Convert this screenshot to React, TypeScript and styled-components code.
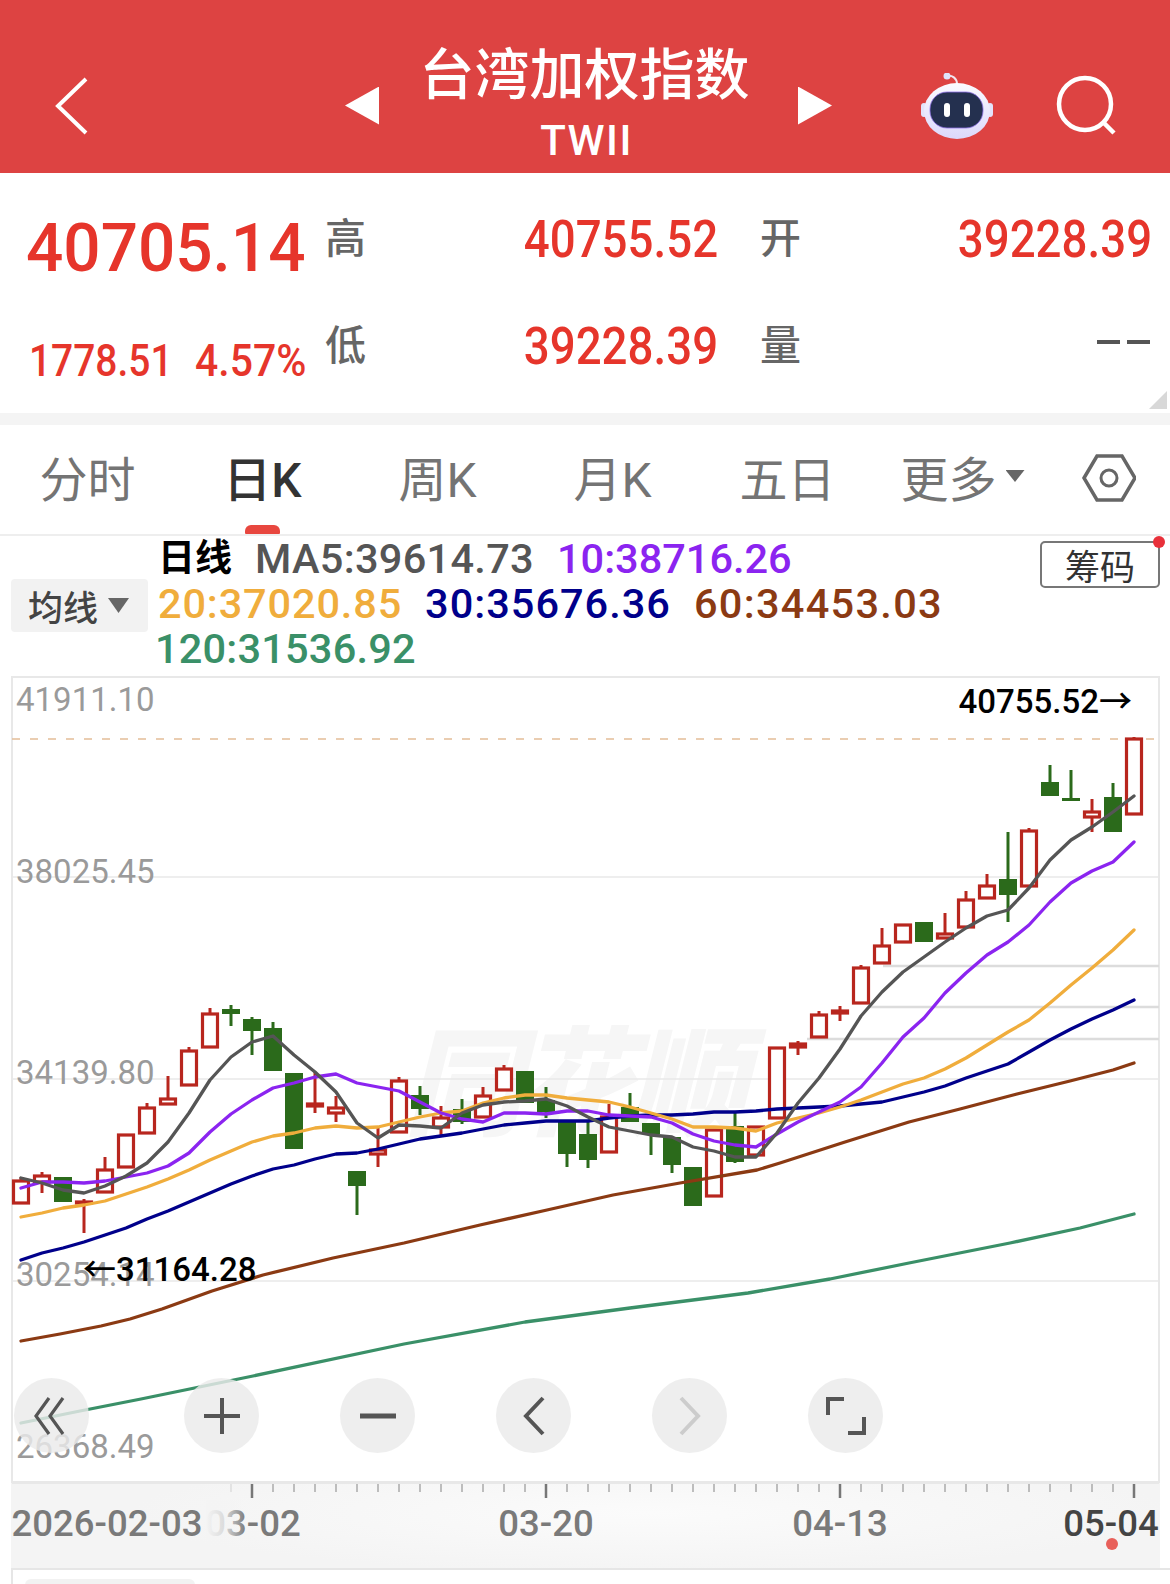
import * as React from "react";
import styled, { createGlobalStyle } from "styled-components";

const SANS = `Roboto, "Noto Sans CJK SC", sans-serif`;
const RED = "#e6352b";

const GlobalStyle = createGlobalStyle`
  html, body {
    margin: 0;
    padding: 0;
    background: #fff;
  }
  * {
    box-sizing: border-box;
  }
`;

const Page = styled.div`
  width: 1170px;
  height: 1584px;
  overflow: hidden;
  background: #fff;
  font-family: ${SANS};
`;

/* top bar */
const TopBar = styled.header`
  display: flex;
  align-items: center;
  height: 173px;
  padding-top: 38px;
  background: #dd4342;
  color: #fff;
`;

const BackSlot = styled.div`
  display: flex;
  width: 345px;
  padding-left: 55px;
`;

const Triangle = styled.div<{ $dir: "left" | "right" }>`
  width: 34px;
  height: 38px;
  background: #fff;
  clip-path: ${(p) =>
    p.$dir === "left"
      ? "polygon(100% 0, 100% 100%, 0 50%)"
      : "polygon(0 0, 100% 50%, 0 100%)"};
`;

const TitleBlock = styled.div`
  align-self: flex-start;
  display: flex;
  flex-direction: column;
  align-items: center;
  width: 419px;
  padding: 1px 8px 0 0;
`;

const Title = styled.div`
  font-size: 55px;
  font-weight: 500;
  line-height: 72px;
`;

const Code = styled.div`
  margin: 5px 0 0 4px;
  font-size: 42px;
  font-weight: 500;
  line-height: 50px;
  letter-spacing: 1.5px;
`;

const RobotSlot = styled.div`
  display: flex;
  margin-left: 88px;
`;

const SearchSlot = styled.div`
  display: flex;
  margin-left: 62px;
`;

/* quote */
const Quote = styled.section`
  position: relative;
  display: grid;
  grid-template-columns: 299px 41px 352px 81px 1fr;
  grid-auto-rows: 107px;
  align-items: center;
  height: 240px;
  padding: 13px 18px 0 26px;
`;

const BigPrice = styled.div`
  padding-top: 17px;
`;

const Num = styled.span<{ $size: number; $narrow?: number; $end?: boolean }>`
  display: inline-block;
  color: ${RED};
  font-size: ${(p) => p.$size}px;
  font-weight: 500;
  line-height: 1;
  white-space: nowrap;
  transform: scaleX(${(p) => p.$narrow ?? 0.895});
  transform-origin: ${(p) => (p.$end ? "right" : "left")} center;
`;

const Value = styled.div`
  text-align: right;
`;

const Label = styled.div<{ $pad?: boolean }>`
  padding-left: ${(p) => (p.$pad ? 42 : 0)}px;
  color: #666;
  font-size: 41px;
  line-height: 1;
  font-weight: 500;
`;

const Change = styled.div`
  display: flex;
  gap: 24px;
  padding-top: 28px;
  margin-left: 3px;
`;

const ChangeNum = styled.span<{ $narrow: number }>`
  display: inline-block;
  color: ${RED};
  font-size: 45px;
  font-weight: 500;
  line-height: 1;
  width: 142px;
  white-space: nowrap;
  transform: scaleX(${(p) => p.$narrow});
  transform-origin: left center;
`;

const Dashes = styled.div`
  display: flex;
  justify-content: flex-end;
  gap: 7px;
  padding: 0 2px 10px 0;
`;

const Dash = styled.span`
  width: 23px;
  height: 4px;
  background: #555;
`;

const Corner = styled.div`
  position: absolute;
  right: 3px;
  bottom: 4px;
  width: 18px;
  height: 18px;
  background: #d8d8d8;
  clip-path: polygon(100% 0, 100% 100%, 0 100%);
`;

const Gap = styled.div`
  height: 12px;
  background: #f4f4f4;
`;

/* period tabs */
const Tabs = styled.nav`
  display: flex;
  align-items: center;
  height: 111px;
  padding-bottom: 7px;
  border-bottom: 2px solid #eee;
`;

const Tab = styled.div<{ $active?: boolean }>`
  position: relative;
  display: flex;
  align-items: center;
  justify-content: center;
  width: 175px;
  height: 100%;
  color: ${(p) => (p.$active ? "#333" : "#747474")};
  font-size: 48px;
  font-weight: ${(p) => (p.$active ? 500 : 400)};
`;

const ActiveBar = styled.span`
  position: absolute;
  left: 70px;
  bottom: -7px;
  width: 35px;
  height: 9px;
  border-radius: 6px 6px 1px 1px;
  background: #e8473f;
`;

const Caret = styled.span`
  width: 19px;
  height: 12px;
  margin-left: 9px;
  background: #666;
  clip-path: polygon(0 0, 100% 0, 50% 100%);
`;

const SettingsSlot = styled.div`
  display: flex;
  justify-content: center;
  flex: 1;
  margin-right: 3px;
  padding-top: 4px;
`;

/* moving averages */
const Legend = styled.section`
  position: relative;
  display: flex;
  height: 140px;
  padding: 0 11px;
`;

const MaSelect = styled.div`
  display: flex;
  align-items: center;
  align-self: flex-start;
  gap: 10px;
  width: 137px;
  height: 53px;
  margin-top: 43px;
  padding-left: 17px;
  border-radius: 4px;
  background: #f2f2f2;
  color: #444;
  font-size: 35px;
  font-weight: 500;
`;

const MaCaret = styled.span`
  width: 21px;
  height: 15px;
  background: #666;
  clip-path: polygon(0 0, 100% 0, 50% 100%);
`;

const MaRows = styled.div`
  display: flex;
  flex-direction: column;
  margin-left: 10px;
`;

const MaRow = styled.div`
  display: flex;
  gap: 23px;
  height: 45px;
  line-height: 45px;
  align-items: center;
  white-space: nowrap;
`;

const MaName = styled.span`
  color: #000;
  font-size: 37px;
  font-weight: 700;
`;

const MaValue = styled.span<{ $color: string; $spacing?: number }>`
  color: ${(p) => p.$color};
  font-size: 41.5px;
  font-weight: 500;
  letter-spacing: ${(p) => p.$spacing ?? 0}px;
`;

const MaValueOutdent = styled(MaValue)`
  margin-left: -3px;
`;

const ChipButton = styled.div`
  position: absolute;
  top: 5px;
  right: 10px;
  display: flex;
  align-items: center;
  justify-content: center;
  width: 120px;
  height: 47px;
  border: 2px solid #777;
  border-radius: 5px;
  color: #333;
  font-size: 35px;
`;

const RedDot = styled.span`
  position: absolute;
  top: -7px;
  right: -7px;
  width: 12px;
  height: 12px;
  border-radius: 50%;
  background: #e8303a;
`;

/* chart */
const ChartBox = styled.div`
  position: relative;
  width: 1149px;
  height: 807px;
  margin-left: 11px;
`;

const ChartSvg = styled.svg`
  display: block;
`;

const Controls = styled.div`
  position: absolute;
  left: 3px;
  top: 702px;
  display: flex;
  gap: 81px;
`;

const RoundButton = styled.div<{ $extra?: number }>`
  display: flex;
  align-items: center;
  justify-content: center;
  width: 75px;
  height: 75px;
  margin-right: ${(p) => p.$extra ?? 0}px;
  border-radius: 50%;
  background: rgba(234, 234, 234, 0.82);
`;

const AxisStrip = styled.div`
  width: 1149px;
  height: 85px;
  margin-left: 11px;
  background: radial-gradient(ellipse 520px 60px at 640px 30px, #fbfbfb, #f4f4f4 100%);
`;

const AxisSvg = styled.svg`
  display: block;
`;

const Footer = styled.div`
  height: 40px;
  margin-left: 11px;
  padding: 9px 0 0 12px;
  border-top: 2px solid #e6e6e6;
  border-left: 2px solid #e6e6e6;
`;

const FooterPill = styled.div`
  width: 170px;
  height: 30px;
  border-radius: 6px;
  background: #f2f2f2;
`;

type Candle = [number, number, number, number, "r" | "g"];

// top, bottom, high, low in page pixels, one candle every 21px from x=21
const candles: Candle[] = [
  [1180, 1204, 1177, 1204, "r"], [1175, 1183, 1172, 1193, "r"], [1177, 1202, 1177, 1202, "g"],
  [1201, 1204, 1199, 1233, "r"], [1169, 1193, 1157, 1193, "r"], [1134, 1168, 1134, 1168, "r"],
  [1107, 1134, 1103, 1134, "r"], [1098, 1105, 1076, 1105, "r"], [1050, 1086, 1047, 1086, "r"],
  [1013, 1048, 1008, 1048, "r"], [1009, 1014, 1005, 1026, "g"], [1019, 1031, 1017, 1055, "g"],
  [1028, 1071, 1022, 1071, "g"], [1073, 1149, 1073, 1149, "g"], [1103, 1107, 1072, 1113, "r"],
  [1107, 1114, 1096, 1122, "r"], [1171, 1186, 1171, 1215, "g"], [1149, 1155, 1128, 1167, "r"],
  [1080, 1133, 1077, 1133, "r"], [1095, 1109, 1086, 1115, "g"], [1117, 1128, 1106, 1137, "r"],
  [1109, 1122, 1099, 1124, "g"], [1095, 1118, 1087, 1118, "r"], [1068, 1091, 1065, 1091, "r"],
  [1071, 1103, 1071, 1103, "g"], [1100, 1112, 1087, 1118, "g"], [1122, 1154, 1122, 1167, "g"],
  [1134, 1160, 1122, 1168, "g"], [1116, 1153, 1104, 1153, "r"], [1107, 1122, 1093, 1122, "g"],
  [1123, 1134, 1123, 1155, "g"], [1137, 1165, 1137, 1173, "g"], [1167, 1206, 1167, 1206, "g"],
  [1129, 1197, 1129, 1197, "r"], [1126, 1162, 1113, 1163, "g"], [1126, 1156, 1126, 1156, "r"],
  [1047, 1119, 1047, 1119, "r"], [1043, 1048, 1041, 1055, "r"], [1014, 1038, 1011, 1038, "r"],
  [1010, 1014, 1006, 1021, "r"], [967, 1004, 965, 1004, "r"], [945, 964, 928, 964, "r"],
  [924, 943, 924, 943, "r"], [922, 942, 922, 942, "g"], [933, 939, 913, 939, "r"],
  [899, 928, 891, 928, "r"], [885, 899, 874, 899, "r"], [879, 895, 832, 922, "g"],
  [830, 887, 828, 887, "r"], [782, 796, 765, 796, "g"], [798, 801, 770, 801, "g"],
  [811, 818, 799, 832, "r"], [797, 832, 783, 832, "g"], [738, 815, 737, 815, "r"],
];

const indexLine = (ys: number[]) => ys.map((y, i) => `${21 + i * 21},${y}`).join(" ");

const ma5 = indexLine([
  1178, 1183, 1190, 1193, 1186, 1176, 1163, 1142, 1113, 1080, 1057, 1042, 1036, 1055, 1072, 1092,
  1123, 1138, 1125, 1126, 1128, 1113, 1105, 1102, 1101, 1099, 1106, 1117, 1127, 1131, 1135, 1137,
  1147, 1151, 1157, 1157, 1133, 1103, 1078, 1049, 1016, 992, 972, 957, 942, 928, 916, 910, 888,
  860, 840, 827, 812, 796,
]);
const ma10 = indexLine([
  1188, 1182, 1182, 1183, 1181, 1177, 1173, 1166, 1153, 1132, 1114, 1100, 1088, 1083, 1077, 1074,
  1083, 1087, 1091, 1102, 1113, 1119, 1122, 1113, 1113, 1114, 1111, 1111, 1115, 1116, 1117, 1123,
  1134, 1141, 1145, 1147, 1134, 1122, 1112, 1102, 1087, 1063, 1037, 1018, 993, 973, 955, 942, 925,
  902, 883, 871, 862, 842,
]);
const ma20 = indexLine([
  1217, 1213, 1208, 1205, 1201, 1194, 1187, 1179, 1170, 1160, 1151, 1142, 1136, 1133, 1128, 1126,
  1128, 1127, 1122, 1117, 1113, 1111, 1103, 1098, 1095, 1095, 1098, 1100, 1102, 1107, 1113, 1119,
  1127, 1127, 1128, 1131, 1123, 1118, 1113, 1107, 1100, 1092, 1084, 1078, 1069, 1058, 1045, 1032,
  1020, 1003, 985, 968, 950, 930,
]);
const ma30 = indexLine([
  1260, 1253, 1248, 1242, 1235, 1228, 1219, 1211, 1202, 1193, 1184, 1176, 1169, 1165, 1159, 1154,
  1153, 1149, 1144, 1139, 1136, 1133, 1129, 1125, 1123, 1121, 1121, 1121, 1118, 1116, 1115, 1115,
  1114, 1112, 1112, 1111, 1109, 1108, 1107, 1106, 1104, 1102, 1097, 1092, 1086, 1078, 1071, 1064,
  1052, 1040, 1029, 1019, 1010, 1000,
]);
const ma60 =
  "21,1341 60,1334 101,1326 130,1319 162,1309 212,1291 263,1275 333,1258 404,1243 480,1225 547,1210 613,1195 680,1183 757,1170 780,1163 845,1142 909,1122 960,1109 1017,1094 1070,1081 1113,1070 1134,1063";
const ma120 =
  "21,1423 80,1411 141,1399 253,1376 404,1344 525,1322 630,1308 748,1293 830,1279 909,1263 1010,1243 1080,1228 1134,1214";

const gridLines = [877, 1079, 1281];
const priceLabels: [string, number][] = [
  ["41911.10", 711],
  ["38025.45", 883],
  ["34139.80", 1084],
  ["30254.14", 1286],
  ["26368.49", 1458],
];
const heavyLines: [number, number][] = [
  [883, 966],
  [870, 1007],
  [807, 1039],
];

const CandleMark: React.FC<{ c: Candle; x: number }> = ({ c, x }) => {
  const [top, bottom, high, low, kind] = c;
  const color = kind === "r" ? "#b8261e" : "#2b6a1b";
  const thin = bottom - top < 5;
  if (kind === "g") {
    return (
      <g>
        <line x1={x} x2={x} y1={high} y2={low} stroke={color} strokeWidth={3} />
        <rect x={x - 9} y={top} width={18} height={bottom - top} fill={color} />
      </g>
    );
  }
  return (
    <g>
      <line x1={x} x2={x} y1={high} y2={low} stroke={color} strokeWidth={3} />
      <rect
        x={x - 7.5}
        y={top + 1}
        width={15}
        height={Math.max(bottom - top - 2, 1)}
        fill={thin ? color : "#fff"}
        stroke={color}
        strokeWidth={3.2}
      />
    </g>
  );
};

const MaLine: React.FC<{ points: string; color: string }> = ({ points, color }) => (
  <polyline
    points={points}
    fill="none"
    stroke={color}
    strokeWidth={3.3}
    strokeLinejoin="round"
    strokeLinecap="round"
  />
);

const KChart: React.FC = () => (
  <ChartSvg width={1149} height={807} viewBox="11 676 1149 807">
    <rect x={12} y={677} width={1147} height={805} fill="#fff" stroke="#e8e8e8" strokeWidth={2} />
    <text
      x={404}
      y={1126}
      fontFamily={SANS}
      fontSize={118}
      fontWeight={900}
      fontStyle="italic"
      fill="#f6f6f6"
      textLength={342}
    >
      同花顺
    </text>
    {gridLines.map((y) => (
      <line key={y} x1={12} x2={1159} y1={y} y2={y} stroke="#e8e8e8" strokeWidth={1.5} />
    ))}
    {heavyLines.map(([x, y]) => (
      <line key={y} x1={x} x2={1159} y1={y} y2={y} stroke="#dcdcdc" strokeWidth={2.5} />
    ))}
    <line x1={12} x2={1159} y1={739} y2={739} stroke="#e3bd98" strokeWidth={1.5} strokeDasharray="8 10" />
    {priceLabels.map(([text, y]) => (
      <text key={text} x={16} y={y} fontFamily={SANS} fontSize={33} fill="#9a9a9a">
        {text}
      </text>
    ))}
    {candles.map((c, i) => (
      <CandleMark key={i} c={c} x={21 + i * 21} />
    ))}
    <MaLine points={ma120} color="#3a9068" />
    <MaLine points={ma60} color="#8b3a13" />
    <MaLine points={ma30} color="#00008b" />
    <MaLine points={ma20} color="#f0ad3c" />
    <MaLine points={ma10} color="#8b24f0" />
    <MaLine points={ma5} color="#555" />
    <text x={1132} y={713} textAnchor="end" fontFamily={SANS} fontSize={33} fontWeight={500} fill="#000">
      40755.52→
    </text>
    <text x={83} y={1281} fontFamily={SANS} fontSize={33} fontWeight={500} fill="#000">
      ←31164.28
    </text>
  </ChartSvg>
);

const Glyph: React.FC<{ d: string; color?: string; width?: number }> = ({ d, color = "#555", width = 4 }) => (
  <svg width={40} height={40} viewBox="-20 -20 40 40">
    <path d={d} fill="none" stroke={color} strokeWidth={width} />
  </svg>
);

const minorTicks = Array.from({ length: 43 }, (_, i) => 231 + i * 21);
const majorTicks = [252, 546, 840, 1134];

const XAxis: React.FC = () => (
  <AxisSvg width={1149} height={85} viewBox="11 1483 1149 85">
    <defs>
      <linearGradient id="fade">
        <stop offset="0" stopColor="#f4f4f4" />
        <stop offset="0.45" stopColor="#f4f4f4" stopOpacity="0.8" />
        <stop offset="1" stopColor="#f4f4f4" stopOpacity="0" />
      </linearGradient>
    </defs>
    <line x1={12} x2={1159} y1={1483.5} y2={1483.5} stroke="#e8e8e8" />
    {minorTicks.map((x) => (
      <line
        key={x}
        x1={x}
        x2={x}
        y1={1484}
        y2={1492}
        stroke={x === 231 ? "#ddd" : "#aaa"}
        strokeWidth={1.5}
      />
    ))}
    {majorTicks.map((x) => (
      <line key={x} x1={x} x2={x} y1={1484} y2={1498} stroke="#777" strokeWidth={2.5} />
    ))}
    <g fontFamily={SANS} fontSize={36.5} fontWeight={500} fill="#7a7a7a" textAnchor="middle">
      <text x={253} y={1536}>03-02</text>
      <rect x={206} y={1500} width={40} height={45} fill="url(#fade)" />
      <text x={107} y={1536}>2026-02-03</text>
      <text x={546} y={1536}>03-20</text>
      <text x={840} y={1536}>04-13</text>
      <text x={1111} y={1536} fill="#444">05-04</text>
    </g>
    <circle cx={1112} cy={1544} r={6} fill="#e8605a" />
  </AxisSvg>
);

const Robot: React.FC = () => (
  <svg width={74} height={66} viewBox="920 72 74 66">
    <defs>
      <linearGradient id="shell" x1="0" y1="0" x2="0" y2="1">
        <stop offset="0" stopColor="#fbfbff" />
        <stop offset="1" stopColor="#dcd8fb" />
      </linearGradient>
    </defs>
    <path d="M947 75 C952 74 957 77 957 83" fill="none" stroke="#f2e6ee" strokeWidth={2} />
    <circle cx={947} cy={75} r={3.5} fill="#dfe4fb" />
    <rect x={921} y={102} width={6} height={14} rx={3} fill="#e3e4fb" />
    <rect x={987} y={102} width={6} height={14} rx={3} fill="#e3e4fb" />
    <ellipse cx={957} cy={110} rx={33} ry={28} fill="url(#shell)" />
    <rect x={930} y={91} width={53} height={36} rx={17} fill="#24304f" stroke="#8f72e8" strokeWidth={0.8} />
    <rect x={944} y={102} width={6} height={14} rx={3} fill="#fff" />
    <rect x={964} y={102} width={6} height={14} rx={3} fill="#fff" />
  </svg>
);

const App: React.FC = () => (
  <Page>
    <GlobalStyle />
    <TopBar>
      <BackSlot>
        <svg width={34} height={58} viewBox="0 0 34 58">
          <path d="M31 2 L3 29 L31 56" fill="none" stroke="#fff" strokeWidth={4} />
        </svg>
      </BackSlot>
      <Triangle $dir="left" />
      <TitleBlock>
        <Title>台湾加权指数</Title>
        <Code>TWII</Code>
      </TitleBlock>
      <Triangle $dir="right" />
      <RobotSlot>
        <Robot />
      </RobotSlot>
      <SearchSlot>
        <svg width={62} height={62} viewBox="0 0 62 62">
          <circle cx={29} cy={29} r={26} fill="none" stroke="#fff" strokeWidth={4.5} />
          <path d="M47 47 L58 58" stroke="#fff" strokeWidth={4.5} />
        </svg>
      </SearchSlot>
    </TopBar>

    <Quote>
      <BigPrice>
        <Num $size={67} $narrow={0.98}>40705.14</Num>
      </BigPrice>
      <Label>高</Label>
      <Value>
        <Num $size={51} $end>40755.52</Num>
      </Value>
      <Label $pad>开</Label>
      <Value>
        <Num $size={51} $end>39228.39</Num>
      </Value>
      <Change>
        <ChangeNum $narrow={0.865}>1778.51</ChangeNum>
        <ChangeNum $narrow={0.91}>4.57%</ChangeNum>
      </Change>
      <Label>低</Label>
      <Value>
        <Num $size={51} $end>39228.39</Num>
      </Value>
      <Label $pad>量</Label>
      <Dashes>
        <Dash />
        <Dash />
      </Dashes>
      <Corner />
    </Quote>
    <Gap />

    <Tabs>
      <Tab>分时</Tab>
      <Tab $active>
        日K
        <ActiveBar />
      </Tab>
      <Tab>周K</Tab>
      <Tab>月K</Tab>
      <Tab>五日</Tab>
      <Tab>
        更多
        <Caret />
      </Tab>
      <SettingsSlot>
        <svg width={54} height={48} viewBox="1082 454 54 48">
          <path
            d="M1084 478 L1097 456 L1122 456 L1135 478 L1122 500 L1097 500 Z"
            fill="none"
            stroke="#666"
            strokeWidth={3.5}
          />
          <circle cx={1109} cy={478} r={8} fill="none" stroke="#666" strokeWidth={3} />
        </svg>
      </SettingsSlot>
    </Tabs>

    <Legend>
      <MaSelect>
        均线
        <MaCaret />
      </MaSelect>
      <MaRows>
        <MaRow>
          <MaName>日线</MaName>
          <MaValue $color="#555" $spacing={0.3}>MA5:39614.73</MaValue>
          <MaValue $color="#8b24f0">10:38716.26</MaValue>
        </MaRow>
        <MaRow>
          <MaValue $color="#f0ad3c" $spacing={0.85}>20:37020.85</MaValue>
          <MaValue $color="#00008b" $spacing={1}>30:35676.36</MaValue>
          <MaValue $color="#8b3a13" $spacing={1.3}>60:34453.03</MaValue>
        </MaRow>
        <MaRow>
          <MaValueOutdent $color="#3a9068" $spacing={0.2}>120:31536.92</MaValueOutdent>
        </MaRow>
      </MaRows>
      <ChipButton>
        筹码
        <RedDot />
      </ChipButton>
    </Legend>

    <ChartBox>
      <KChart />
      <Controls>
        <RoundButton $extra={14}>
          <Glyph d="M-3 -18 L-16 0 L-3 18 M11 -18 L-2 0 L11 18" width={3.2} />
        </RoundButton>
        <RoundButton>
          <Glyph d="M-18 0 H18 M0 -18 V18" />
        </RoundButton>
        <RoundButton>
          <Glyph d="M-18 0 H18" width={5} />
        </RoundButton>
        <RoundButton>
          <Glyph d="M9 -18 L-8 0 L9 18" />
        </RoundButton>
        <RoundButton>
          <Glyph d="M-9 -18 L8 0 L-9 18" color="#ccc" />
        </RoundButton>
        <RoundButton>
          <Glyph d="M-2 -17 H-18 V-1 M2 17 H18 V1" />
        </RoundButton>
      </Controls>
    </ChartBox>

    <AxisStrip>
      <XAxis />
    </AxisStrip>
    <Footer>
      <FooterPill />
    </Footer>
  </Page>
);

export default App;
